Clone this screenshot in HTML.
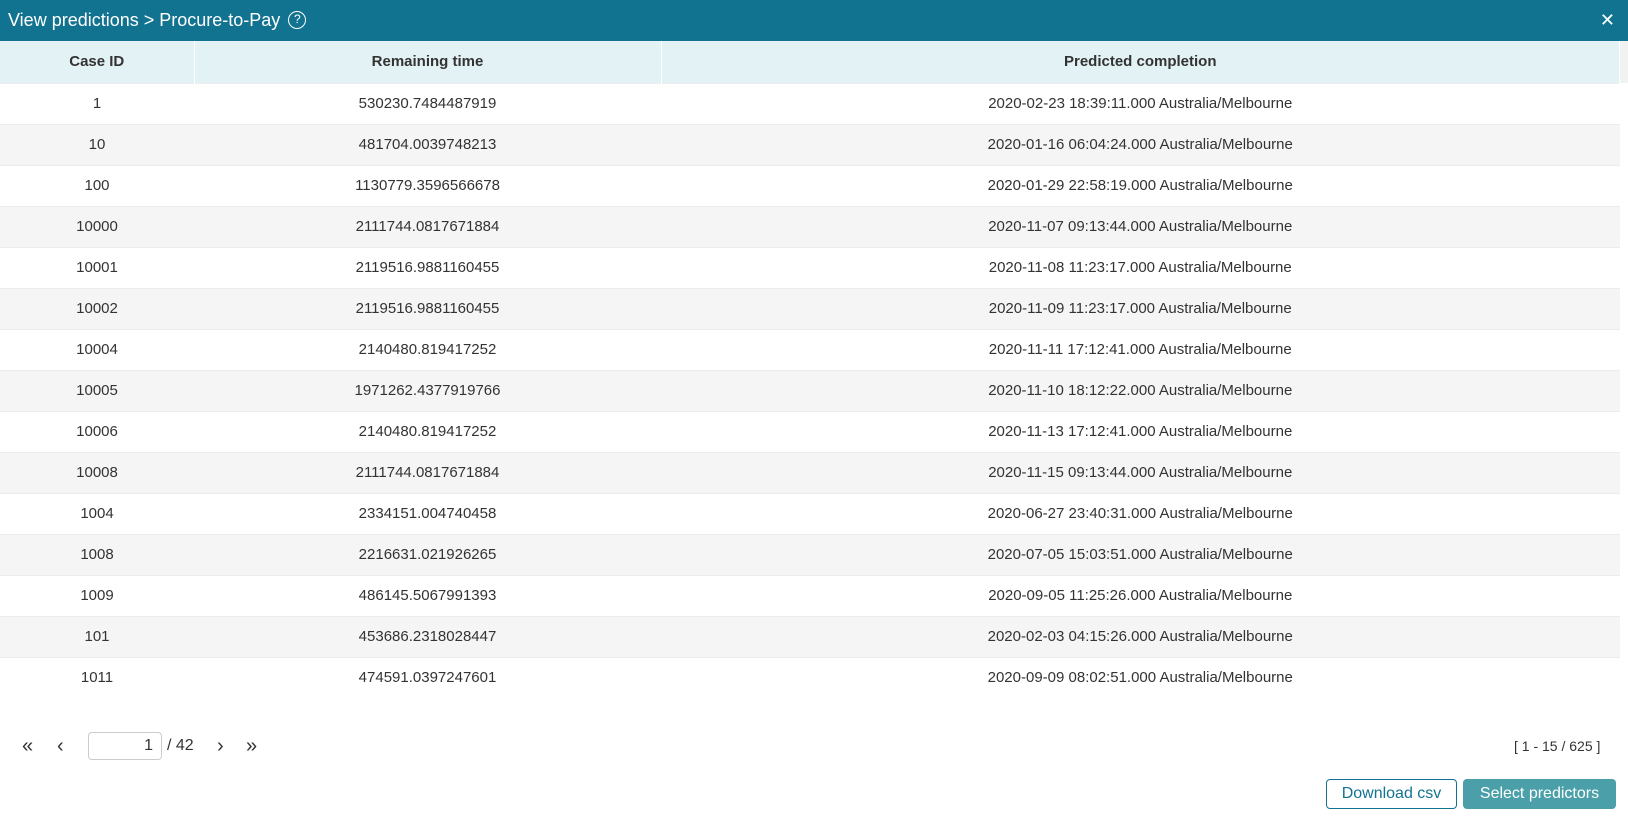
<!DOCTYPE html>
<html><head><meta charset="utf-8"><style>
*{box-sizing:border-box;margin:0;padding:0}
body{width:1628px;height:821px;background:#fff;font-family:"Liberation Sans",sans-serif;color:#333;position:relative;overflow:hidden}
.top{position:absolute;left:0;top:0;width:1628px;height:41px;background:#127390;color:#fff;font-size:18px;line-height:41px;padding-left:8px}
.q{display:inline-block;width:18px;height:18px;border:1.5px solid #fff;border-radius:50%;font-size:12px;line-height:15px;text-align:center;vertical-align:middle;margin-left:8px;margin-top:-3px}
.x{position:absolute;right:13px;top:0;font-size:18px}
table{position:absolute;left:0;top:41px;width:1620px;border-collapse:collapse;font-size:15px}
th{background:#e3f2f4;height:42px;font-weight:bold;color:#333;border-right:1px solid #fff}
td{height:41px;text-align:center;border-top:1px solid #ececec}
tr:nth-child(odd) td{background:#f5f5f5}
.gut{position:absolute;left:1620px;top:41px;width:8px;height:42px;background:#f2f2f2}
.pg{position:absolute;top:732px;font-size:16px;line-height:28px;color:#333}
.inp{position:absolute;left:88px;top:732px;width:74px;height:28px;border:1px solid #ccc;border-radius:4px;text-align:right;padding-right:8px;font-size:16px;line-height:26px}
.btn{position:absolute;top:779px;height:30px;border-radius:4px;font-size:16px;text-align:center}
</style></head><body>
<div class="top">View predictions &gt; Procure-to-Pay<span class="q">?</span><span class="x">✕</span></div>
<table>
<tr><th style="width:194px">Case ID</th><th style="width:467px">Remaining time</th><th>Predicted completion</th></tr>
<tr><td>1</td><td>530230.7484487919</td><td>2020-02-23 18:39:11.000 Australia/Melbourne</td></tr>
<tr><td>10</td><td>481704.0039748213</td><td>2020-01-16 06:04:24.000 Australia/Melbourne</td></tr>
<tr><td>100</td><td>1130779.3596566678</td><td>2020-01-29 22:58:19.000 Australia/Melbourne</td></tr>
<tr><td>10000</td><td>2111744.0817671884</td><td>2020-11-07 09:13:44.000 Australia/Melbourne</td></tr>
<tr><td>10001</td><td>2119516.9881160455</td><td>2020-11-08 11:23:17.000 Australia/Melbourne</td></tr>
<tr><td>10002</td><td>2119516.9881160455</td><td>2020-11-09 11:23:17.000 Australia/Melbourne</td></tr>
<tr><td>10004</td><td>2140480.819417252</td><td>2020-11-11 17:12:41.000 Australia/Melbourne</td></tr>
<tr><td>10005</td><td>1971262.4377919766</td><td>2020-11-10 18:12:22.000 Australia/Melbourne</td></tr>
<tr><td>10006</td><td>2140480.819417252</td><td>2020-11-13 17:12:41.000 Australia/Melbourne</td></tr>
<tr><td>10008</td><td>2111744.0817671884</td><td>2020-11-15 09:13:44.000 Australia/Melbourne</td></tr>
<tr><td>1004</td><td>2334151.004740458</td><td>2020-06-27 23:40:31.000 Australia/Melbourne</td></tr>
<tr><td>1008</td><td>2216631.021926265</td><td>2020-07-05 15:03:51.000 Australia/Melbourne</td></tr>
<tr><td>1009</td><td>486145.5067991393</td><td>2020-09-05 11:25:26.000 Australia/Melbourne</td></tr>
<tr><td>101</td><td>453686.2318028447</td><td>2020-02-03 04:15:26.000 Australia/Melbourne</td></tr>
<tr><td>1011</td><td>474591.0397247601</td><td>2020-09-09 08:02:51.000 Australia/Melbourne</td></tr>
</table>
<div class="gut"></div>
<div class="pg" style="left:22px;font-size:20px">«</div>
<div class="pg" style="left:57px;font-size:20px">‹</div>
<div class="inp">1</div>
<div class="pg" style="left:167px">/ 42</div>
<div class="pg" style="left:217px;font-size:20px">›</div>
<div class="pg" style="left:246px;font-size:20px">»</div>
<div class="pg" style="left:1514px;font-size:14px">[ 1 - 15 / 625 ]</div>
<div class="btn" style="left:1326px;width:131px;border:1px solid #127390;color:#127390;background:#fff;line-height:28px">Download csv</div>
<div class="btn" style="left:1463px;width:153px;background:#4a9fa8;color:#fff;line-height:30px">Select predictors</div>
</body></html>
